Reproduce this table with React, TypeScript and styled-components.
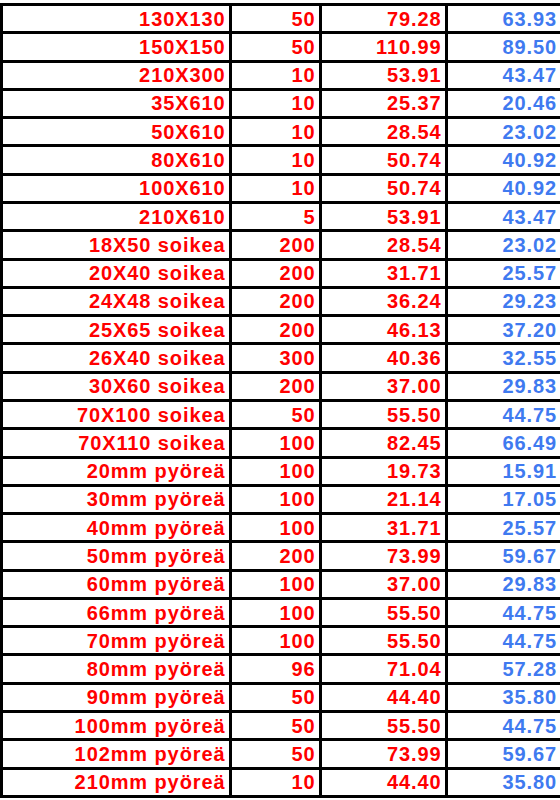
import React from "react";
import styled, { createGlobalStyle } from "styled-components";

type Row = [string, string, string, string];

const rows: Row[] = [
  ["130X130", "50", "79.28", "63.93"],
  ["150X150", "50", "110.99", "89.50"],
  ["210X300", "10", "53.91", "43.47"],
  ["35X610", "10", "25.37", "20.46"],
  ["50X610", "10", "28.54", "23.02"],
  ["80X610", "10", "50.74", "40.92"],
  ["100X610", "10", "50.74", "40.92"],
  ["210X610", "5", "53.91", "43.47"],
  ["18X50 soikea", "200", "28.54", "23.02"],
  ["20X40 soikea", "200", "31.71", "25.57"],
  ["24X48 soikea", "200", "36.24", "29.23"],
  ["25X65 soikea", "200", "46.13", "37.20"],
  ["26X40 soikea", "300", "40.36", "32.55"],
  ["30X60 soikea", "200", "37.00", "29.83"],
  ["70X100 soikea", "50", "55.50", "44.75"],
  ["70X110 soikea", "100", "82.45", "66.49"],
  ["20mm pyöreä", "100", "19.73", "15.91"],
  ["30mm pyöreä", "100", "21.14", "17.05"],
  ["40mm pyöreä", "100", "31.71", "25.57"],
  ["50mm pyöreä", "200", "73.99", "59.67"],
  ["60mm pyöreä", "100", "37.00", "29.83"],
  ["66mm pyöreä", "100", "55.50", "44.75"],
  ["70mm pyöreä", "100", "55.50", "44.75"],
  ["80mm pyöreä", "96", "71.04", "57.28"],
  ["90mm pyöreä", "50", "44.40", "35.80"],
  ["100mm pyöreä", "50", "55.50", "44.75"],
  ["102mm pyöreä", "50", "73.99", "59.67"],
  ["210mm pyöreä", "10", "44.40", "35.80"],
];

const GlobalStyle = createGlobalStyle`
  html, body {
    margin: 0;
    padding: 0;
    background: #fff;
  }
  body {
    font-family: "Liberation Sans", Arial, sans-serif;
  }
`;

export default function App() {
  return (
    <>
      <GlobalStyle />
      <PriceTable>
        <colgroup>
          <Col $w={228.5} />
          <Col $w={90} />
          <Col $w={126} />
          <Col $w={115.5} />
        </colgroup>
        <tbody>
          {rows.map(([size, qty, price, net]) => (
            <tr key={size}>
              <Cell>{size}</Cell>
              <Cell>{qty}</Cell>
              <Cell>{price}</Cell>
              <Cell $blue>{net}</Cell>
            </tr>
          ))}
        </tbody>
      </PriceTable>
    </>
  );
}

const PriceTable = styled.table`
  margin-top: 3px;
  width: 560px;
  table-layout: fixed;
  border-collapse: collapse;
  border: 3px solid #000;
`;

const Col = styled.col<{ $w: number }>`
  width: ${(p) => p.$w}px;
`;

const Cell = styled.td<{ $blue?: boolean }>`
  height: 28.29px;
  padding: 0 3px 0 0;
  border: 3px solid #000;
  text-align: right;
  vertical-align: middle;
  font-size: 20px;
  font-weight: 700;
  letter-spacing: 0.9px;
  line-height: 1;
  color: ${(p) => (p.$blue ? "#3f7af0" : "#ff0000")};
  white-space: nowrap;
  box-sizing: border-box;
`;
